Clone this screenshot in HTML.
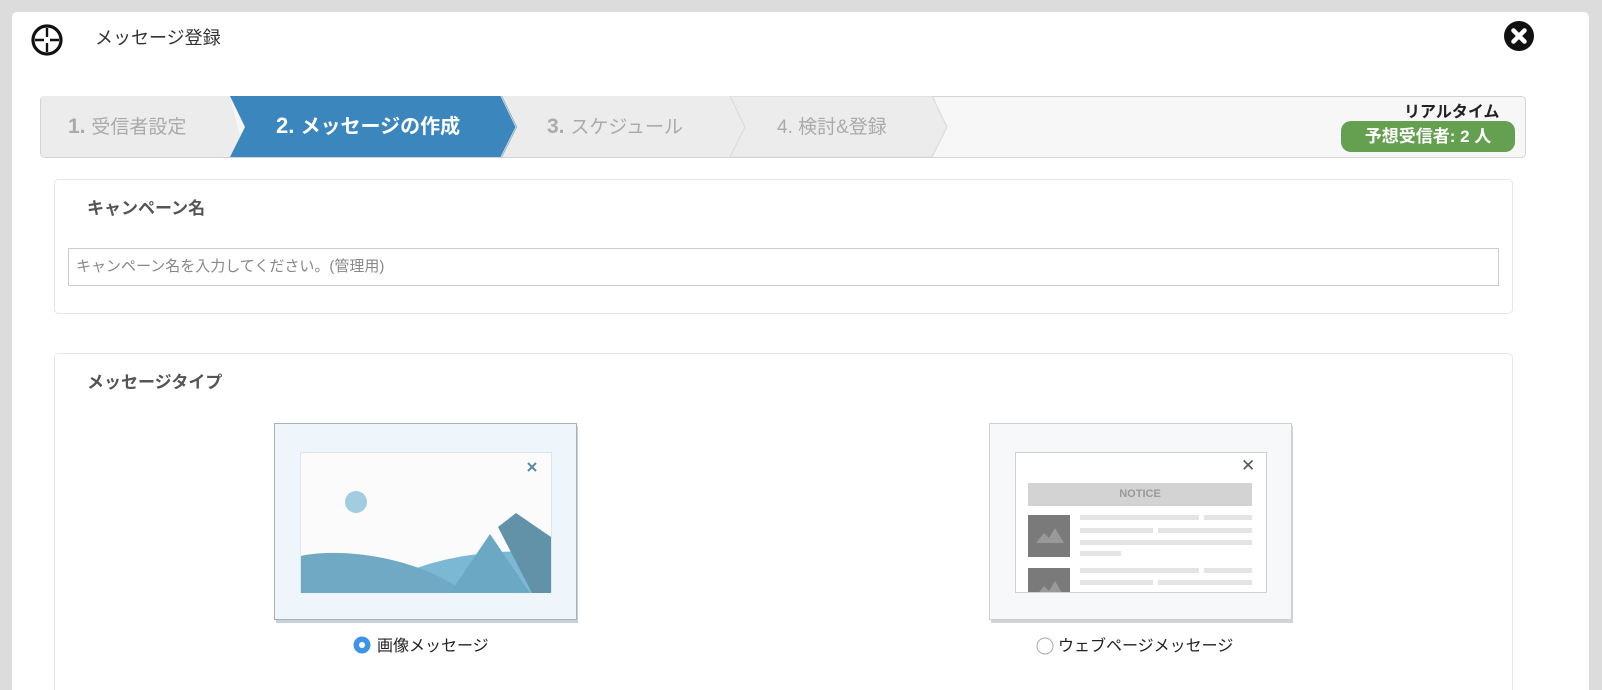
<!DOCTYPE html>
<html><head><meta charset="utf-8"><style>
*{box-sizing:border-box;margin:0;padding:0}
html,body{width:1602px;height:690px;overflow:hidden}
body{background:#dcdcdd;font-family:"Liberation Sans","Noto Sans CJK JP",sans-serif;position:relative}
.modal{position:absolute;left:12px;top:12px;width:1577px;height:678px;background:#fff;border-radius:5px 5px 0 0}
.a{position:absolute}
.panel{position:absolute;border:1px solid #e6e6e6;border-radius:5px;background:#fff}
.h{position:absolute;font-size:17px;font-weight:bold;color:#555}
.ln{position:absolute;height:5px;background:#e4e4e4}
</style></head><body>
<div class="modal"></div>
<svg class="a" style="left:30px;top:23px" width="34" height="34" viewBox="0 0 34 34"><circle cx="17" cy="17" r="14" fill="none" stroke="#111" stroke-width="3.2"/><path d="M17 5v9M17 20v9M5 17h9M20 17h9" stroke="#111" stroke-width="2.4"/></svg>
<div class="a" style="left:95px;top:24px;font-size:18px;color:#333">メッセージ登録</div>
<svg class="a" style="left:1503px;top:20px" width="32" height="32" viewBox="0 0 32 32"><circle cx="16" cy="16" r="15" fill="#111"/><path d="M10.5 10.5l11 11M21.5 10.5l-11 11" stroke="#fff" stroke-width="4.5" stroke-linecap="round"/></svg>

<svg class="a" style="left:40px;top:96px" width="1486" height="62" viewBox="0 0 1486 62">
<rect x="0.5" y="0.5" width="1485" height="61" rx="4" fill="#f7f7f7" stroke="#d4d4d4"/>
<path d="M1 4a4 4 0 0 1 4-4H190L205 61H5a4 4 0 0 1-4-4z" fill="#ececec"/>
<path d="M461 0H690L705 31L690 61H461L476 31z" fill="#ececec"/>
<path d="M690 0H892L907 31L892 61H690L705 31z" fill="#ececec" stroke="#d8d8d8"/>
<path d="M190 0H462L477 31L462 61H190L205 31z" fill="#3a86bd"/>
<path d="M461 61L476 31L461 0" fill="none" stroke="#d8d8d8"/>
</svg>
<div class="a" style="left:68px;top:112px;font-size:21px;color:#aaa;font-weight:bold">1. <span style="font-weight:normal;font-size:19px">受信者設定</span></div>
<div class="a" style="left:276px;top:110px;font-size:22px;color:#fff;font-weight:bold">2. <span style="font-size:20px">メッセージの作成</span></div>
<div class="a" style="left:547px;top:112px;font-size:21px;color:#aaa;font-weight:bold">3. <span style="font-weight:normal;font-size:19px">スケジュール</span></div>
<div class="a" style="left:777px;top:112px;font-size:19px;color:#aaa">4. 検討&amp;登録</div>
<div class="a" style="left:1404px;top:98px;font-size:16px;font-weight:bold;color:#222">リアルタイム</div>
<div class="a" style="left:1341px;top:121px;width:174px;height:31px;border-radius:10px;background:#65a050;color:#fff;font-size:17px;font-weight:bold;text-align:center;line-height:31px">予想受信者: 2 人</div>

<div class="panel" style="left:54px;top:179px;width:1459px;height:135px"></div>
<div class="h" style="left:87px;top:194px">キャンペーン名</div>
<div class="a" style="left:68px;top:248px;width:1431px;height:38px;border:1px solid #ccc;font-size:15px;color:#888;line-height:36px;padding-left:7px">キャンペーン名を入力してください。(管理用)</div>

<div class="panel" style="left:54px;top:353px;width:1459px;height:337px;border-bottom:none;border-radius:5px 5px 0 0"></div>
<div class="h" style="left:87px;top:368px">メッセージタイプ</div>

<div class="a" style="left:276px;top:426px;width:302px;height:197px;background:#c8d1d8"></div>
<div class="a" style="left:274px;top:423px;width:303px;height:197px;background:#eef5fb;border:1px solid #a3b2bd"></div>
<svg class="a" style="left:300px;top:452px" width="252" height="141" viewBox="0 0 252 141">
<rect x="0.5" y="0.5" width="251" height="140" fill="#fbfbfb" stroke="#dde4ea"/>
<path d="M228 11l8 8M236 11l-8 8" stroke="#5a8aa3" stroke-width="2"/>
<circle cx="56" cy="50" r="11" fill="#a2cce0"/>
<path d="M75 141C110 105 200 95 251 101V141z" fill="#7ab8d4"/>
<path d="M1 104C40 95 120 105 165 141H1z" fill="#6fa9c4"/>
<path d="M198 75L216 61L251 85V141H232z" fill="#6292a7"/>
<path d="M150 141L190 82L230 141z" fill="#6aa8c4"/>
</svg>
<svg class="a" style="left:353px;top:636px" width="18" height="18"><circle cx="9" cy="9" r="8.5" fill="#3e95e8"/><circle cx="9" cy="9" r="3" fill="#fff"/></svg>
<div class="a" style="left:377px;top:632px;font-size:16px;color:#222">画像メッセージ</div>

<div class="a" style="left:991px;top:426px;width:302px;height:197px;background:#d3d3d3"></div>
<div class="a" style="left:989px;top:423px;width:303px;height:197px;background:#f7f8fa;border:1px solid #cfcfcf"></div>
<div class="a" style="left:1015px;top:452px;width:252px;height:141px;background:#fff;border:1px solid #cfcfcf;overflow:hidden">
<div class="a" style="left:225px;top:3px;font-size:17px;color:#555">✕</div>
<div class="a" style="left:12px;top:30px;width:224px;height:23px;background:#d3d3d3;color:#999;font-size:11px;font-weight:bold;text-align:center;line-height:23px">NOTICE</div>
<svg class="a" style="left:12px;top:62px" width="42" height="100"><rect width="42" height="42" fill="#7a7a7a"/><path d="M8 28L16 18L21 23L27 13L36 28z" fill="#999"/><rect y="53" width="42" height="42" fill="#7a7a7a"/><path d="M8 81L16 71L21 76L27 66L36 81z" fill="#999"/></svg>
<div class="ln" style="left:64px;top:62px;width:119px"></div><div class="ln" style="left:188px;top:62px;width:48px"></div>
<div class="ln" style="left:64px;top:75px;width:73px"></div><div class="ln" style="left:142px;top:75px;width:94px"></div>
<div class="ln" style="left:64px;top:87px;width:172px"></div>
<div class="ln" style="left:64px;top:98px;width:41px"></div>
<div class="ln" style="left:64px;top:115px;width:119px"></div><div class="ln" style="left:188px;top:115px;width:48px"></div>
<div class="ln" style="left:64px;top:127px;width:73px"></div><div class="ln" style="left:142px;top:127px;width:94px"></div>
</div>
<svg class="a" style="left:1036px;top:637px" width="18" height="18"><circle cx="9" cy="9" r="8" fill="#fff" stroke="#aaa"/></svg>
<div class="a" style="left:1058px;top:632px;font-size:16px;color:#222">ウェブページメッセージ</div>
</body></html>
